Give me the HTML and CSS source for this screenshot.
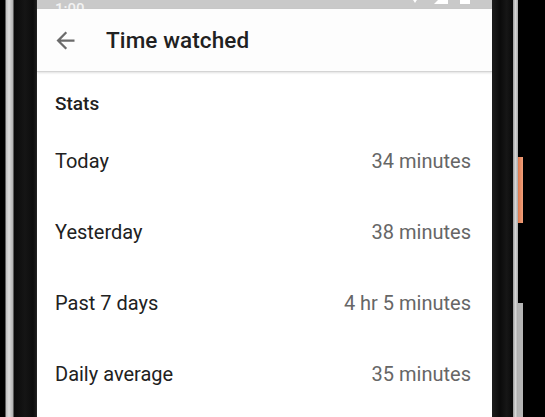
FILE: index.html
```html
<!DOCTYPE html>
<html>
<head>
<meta charset="utf-8">
<link rel="stylesheet" href="styles.css">
</head>
<body>
<div class="device">
  <div class="bezel-left"></div>
  <div class="screen">
    <div class="status-bar">
      <span class="clock">1:00</span>
      <div class="status-icons">
        <svg class="si" width="14" height="14" viewBox="0 0 14 14"><path d="M0 2 L7 13 L14 2 Z" fill="#fff"/></svg>
        <svg class="si" width="14" height="14" viewBox="0 0 14 14"><path d="M14 0 L14 14 L0 14 Z" fill="#fff"/></svg>
        <svg class="si" width="10" height="14" viewBox="0 0 10 14"><rect x="0" y="0" width="10" height="14" fill="#fff"/></svg>
      </div>
    </div>
    <div class="app-bar">
      <svg class="back" width="24" height="24" viewBox="0 0 24 24"><path d="M20 11H7.83l5.59-5.59L12 4l-8 8 8 8 1.41-1.41L7.83 13H20v-2z" fill="#6b6b6b"/></svg>
      <h1 class="title">Time watched</h1>
    </div>
    <div class="content">
      <div class="section-title">Stats</div>
      <div class="row"><span class="label">Today</span><span class="value">34 minutes</span></div>
      <div class="row"><span class="label">Yesterday</span><span class="value">38 minutes</span></div>
      <div class="row"><span class="label">Past 7 days</span><span class="value">4 hr 5 minutes</span></div>
      <div class="row"><span class="label">Daily average</span><span class="value">35 minutes</span></div>
    </div>
  </div>
  <div class="bezel-right">
    <div class="bezel-inner"></div>
    <div class="bezel-stripe"></div>
    <div class="button-col">
      <div class="col-black1"></div>
      <div class="power-btn"></div>
      <div class="col-black2"></div>
      <div class="col-gray"></div>
    </div>
  </div>
</div>
</body>
</html>
```
FILE: styles.css
```css
* { box-sizing: border-box; }
html, body {
  margin: 0;
  padding: 0;
  background: #000;
  width: 545px;
  height: 417px;
  overflow: hidden;
  font-family: Roboto, "Noto Sans", "Liberation Sans", sans-serif;
}
.device {
  display: flex;
  width: 545px;
  height: 417px;
}
.bezel-left {
  width: 37px;
  flex: none;
  background: linear-gradient(to right, #000 0px, #000 5px, #bdbdbd 6px, #dadada 9px, #b0b0b0 13px, #0a0a0a 14px, #151515 25px, #0d0d0d 33px, #1a1a1a 36px, #2a2a2a 37px);
}
.screen {
  width: 455px;
  flex: none;
  background: #fff;
  display: flex;
  flex-direction: column;
}
.status-bar {
  height: 9px;
  background: #c9c9c9;
  overflow: hidden;
  display: flex;
  align-items: flex-end;
  justify-content: space-between;
  padding: 0 22px 0 18px;
}
.clock {
  color: #f2f2f2;
  font-size: 15px;
  line-height: 15px;
  margin-bottom: -8px;
  font-weight: 500;
}
.status-icons {
  display: flex;
  gap: 12px;
  align-items: flex-end;
  margin-bottom: 5px;
}
.si { display: block; }
.app-bar {
  height: 63px;
  background: #fdfdfd;
  display: flex;
  align-items: center;
  padding-left: 15px;
  border-bottom: 1px solid #d4d4d4;
  box-shadow: 0 1px 2px rgba(0,0,0,0.12);
  position: relative;
}
.back {
  width: 27px;
  height: 27px;
  flex: none;
}
.title {
  margin: 0 0 0 27px;
  font-size: 22.5px;
  font-weight: 500;
  color: #212121;
  letter-spacing: 0.1px;
}
.content {
  display: flex;
  flex-direction: column;
}
.section-title {
  font-size: 19px;
  font-weight: 500;
  color: #212121;
  line-height: 20px;
  margin: 22px 0 0 18px;
}
.section-title + .row { margin-top: 11px; }
.row {
  height: 71.2px;
  display: flex;
  align-items: center;
  justify-content: space-between;
  padding: 0 21px 0 18px;
}
.label {
  font-size: 20px;
  color: #212121;
}
.value {
  font-size: 20px;
  color: #666;
}
.bezel-right {
  flex: 1;
  display: flex;
}
.bezel-inner {
  width: 21px;
  background: linear-gradient(to right, #1d1d1d, #0b0b0b 40%, #161616 70%, #0a0a0a);
}
.bezel-stripe {
  width: 5px;
  background: linear-gradient(to right, #9a9a9a, #d6d6d6 50%, #a8a8a8);
}
.button-col {
  width: 5px;
  display: flex;
  flex-direction: column;
}
.col-black1 { height: 157px; background: #000; }
.power-btn { height: 66px; background: linear-gradient(to right, #e07a4e, #f0a07c); }
.col-black2 { height: 80px; background: #000; }
.col-gray { flex: 1; background: #b5b5b5; }
```
